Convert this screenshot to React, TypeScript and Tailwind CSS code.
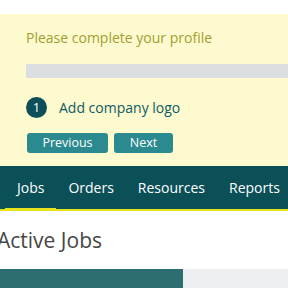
export default function App() {
  const tabs = ["Jobs", "Orders", "Resources", "Reports"]
  return (
    <div className="w-[288px] h-[288px] overflow-hidden bg-white font-['Open_Sans',sans-serif]">
      <div className="h-[14px]" />
      <section className="bg-[#fefacf] pl-[26px] pt-[14px] pb-[13px]">
        <h2 className="text-[14px] leading-[20px] text-[#a0a031]">Please complete your profile</h2>
        <div className="mt-[16px] h-[14px] bg-[#dcdfe2]" />
        <div className="mt-[19px] flex items-center gap-[12px]">
          <span className="w-[21px] h-[21px] rounded-full bg-[#0c4f58] text-white text-[13px] flex items-center justify-center">
            1
          </span>
          <span className="text-[14px] text-[#0e5b63]">Add company logo</span>
        </div>
        <div className="mt-[15px] flex gap-[6px] pl-px">
          <button className="w-[81px] h-[20px] rounded-[3px] bg-[#2b8a90] text-white text-[12.5px] leading-[20px]">
            Previous
          </button>
          <button className="w-[59px] h-[20px] rounded-[3px] bg-[#2b8a90] text-white text-[12.5px] leading-[20px]">
            Next
          </button>
        </div>
      </section>
      <nav className="bg-[#0b4f57] h-[45px] border-b-[2px] border-[#e6e21c] flex pl-[5px] whitespace-nowrap">
        {tabs.map((t, i) => (
          <a
            key={t}
            className={
              "px-[12px] pt-[11px] text-[14px] text-white " +
              (i === 0 ? "border-b-[3px] border-[#e6e21c] -mb-[2px]" : "")
            }
          >
            {t}
          </a>
        ))}
      </nav>
      <h1 className="-ml-[3px] mt-[15px] text-[21px] leading-[28px] text-[#464646]">Active Jobs</h1>
      <div className="mt-[15px] flex h-[30px]">
        <div className="w-[183px] bg-[#2c6e72]" />
        <div className="flex-1 bg-[#eeeff0]" />
      </div>
    </div>
  )
}
